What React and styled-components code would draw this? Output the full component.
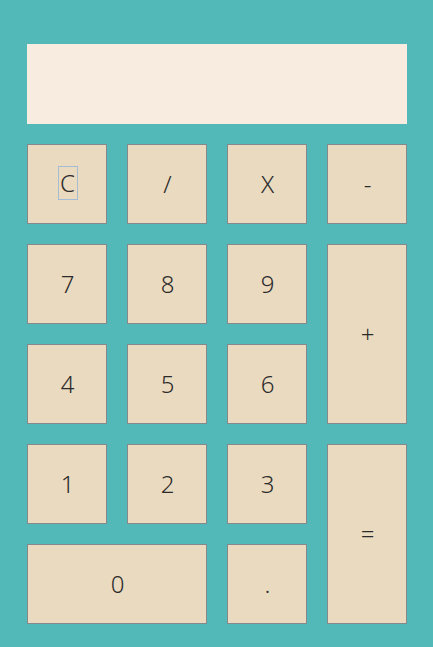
import styled, { createGlobalStyle } from "styled-components";

const GlobalStyle = createGlobalStyle`
  html, body {
    margin: 0;
    padding: 0;
    background: #53b8b8;
    min-height: 100%;
  }
  body {
    font-family: "Noto Sans", "DejaVu Sans", sans-serif;
  }
`;

const keys = [
  { label: "C", focused: true },
  { label: "/" },
  { label: "X" },
  { label: "-" },
  { label: "7" },
  { label: "8" },
  { label: "9" },
  { label: "+", rows: 2 },
  { label: "4" },
  { label: "5" },
  { label: "6" },
  { label: "1" },
  { label: "2" },
  { label: "3" },
  { label: "=", rows: 2 },
  { label: "0", cols: 2 },
  { label: "." },
];

const App = () => {
  return (
    <>
      <GlobalStyle />
      <Calculator>
        <Display />
        <Keypad>
          {keys.map((k) => (
            <Key key={k.label} $rows={k.rows} $cols={k.cols}>
              {k.focused ? <FocusMark>{k.label}</FocusMark> : k.label}
            </Key>
          ))}
        </Keypad>
      </Calculator>
    </>
  );
};
export default App;

const Calculator = styled.div`
  width: 380px;
  margin: 0 auto;
  padding: 44px 0 23px;
  display: flex;
  flex-direction: column;
  gap: 20px;
`;
const Display = styled.div`
  height: 80px;
  background: #f8ece0;
`;
const Keypad = styled.div`
  display: grid;
  grid-template-columns: repeat(4, 80px);
  grid-auto-rows: 80px;
  gap: 20px;
`;
const Key = styled.div`
  box-sizing: border-box;
  grid-row: span ${(p) => p.$rows || 1};
  grid-column: span ${(p) => p.$cols || 1};
  display: flex;
  align-items: center;
  justify-content: center;
  padding: 0 0 2px 2px;
  background: #eadac0;
  border: 1px solid #85898c;
  color: #2b2b2b;
  font-size: 24px;
  font-weight: 300;
`;
const FocusMark = styled.span`
  display: inline-block;
  box-sizing: border-box;
  width: 20px;
  height: 34px;
  line-height: 32px;
  text-align: center;
  border: 1px solid #a4bcd4;
`;
